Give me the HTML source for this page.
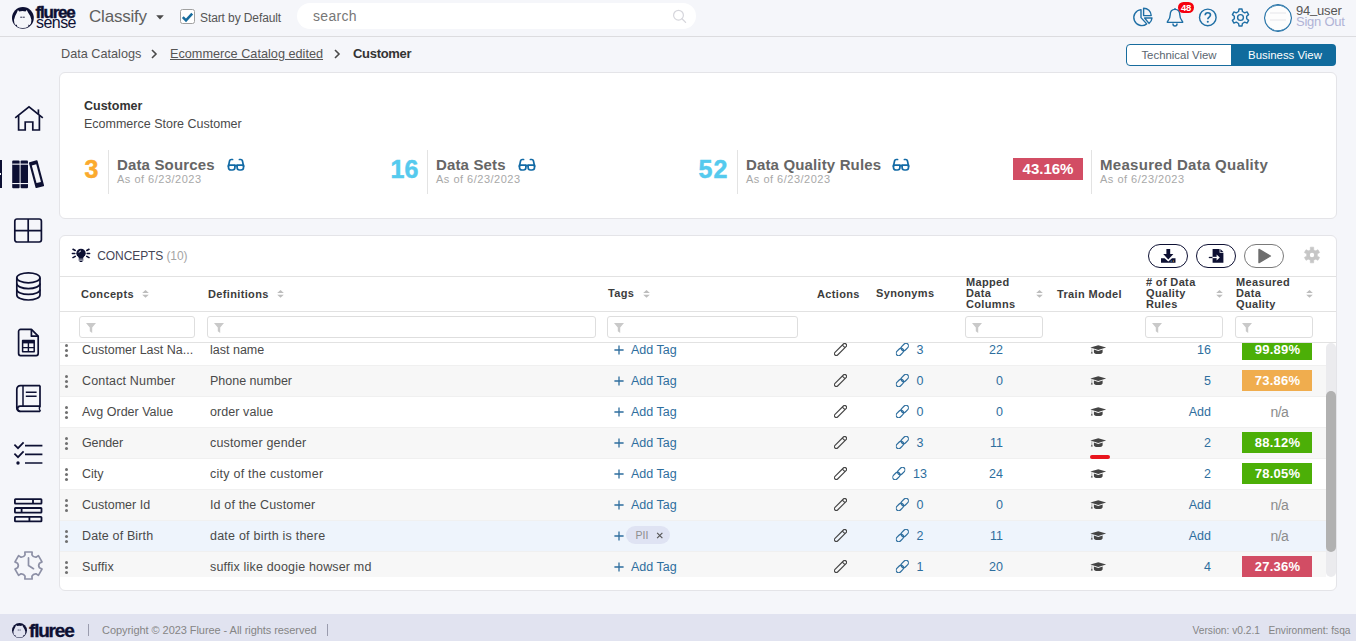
<!DOCTYPE html>
<html><head><meta charset="utf-8"><title>Customer</title>
<style>
*{box-sizing:border-box;margin:0;padding:0}
html,body{width:1356px;height:641px;overflow:hidden}
body{background:#f5f6fa;font-family:"Liberation Sans",sans-serif;color:#4b4b4b;position:relative;font-size:13px}
.abs{position:absolute;white-space:nowrap}
svg{position:absolute;overflow:visible}
/* header */
#hdr{position:absolute;left:0;top:0;width:1356px;height:37px;border-bottom:1px solid #dcdcdf}
.logo-f{left:35.5px;top:3px;font-size:17px;font-weight:bold;letter-spacing:-1.2px;color:#0d1033;line-height:20px;-webkit-text-stroke:0.45px #0d1033}
.logo-s{left:36px;top:13.5px;font-size:16px;color:#0d1033;line-height:18px;letter-spacing:-0.55px}
#search{position:absolute;left:297px;top:3px;width:399px;height:26px;background:#fff;border-radius:14px}
/* cards */
.card{position:absolute;background:#fff;border:1px solid #e4e4e8;border-radius:6px}
.num{font-weight:bold;font-size:25px;line-height:30px;-webkit-text-stroke:0.5px currentColor}
.lbl{font-weight:bold;font-size:15px;color:#666;line-height:18px;letter-spacing:0.15px}
.asof{font-size:11px;color:#a8a8a8;line-height:12px;letter-spacing:0.5px}
.vdiv{position:absolute;width:1px;background:#e3e3e3}
/* table */
.th{font-weight:bold;font-size:11px;color:#3c3c3c;line-height:11px;letter-spacing:0.35px}
.fi{position:absolute;height:22px;top:316px;border:1px solid #dedede;border-radius:3px;background:#fff}
.row{position:absolute;left:60px;width:1266px;height:31px;border-bottom:1px solid #f0f0f0;background:#fff}
.row.alt{background:#f7f7f7}
.row.hov{background:#eef4fc}
.row div{position:absolute;white-space:nowrap;line-height:16px;top:7px;font-size:12.5px;color:#4a4a4a}
.row .lk{color:#2e6e9e}
.row .badge{position:absolute;left:1182px;top:4px;width:70px;height:21px;color:#fff;font-weight:bold;font-size:13px;text-align:center;line-height:21px;letter-spacing:0.2px;padding-left:1px}

.hd{position:absolute;left:5px;top:8.5px;width:3px;height:3px;border-radius:50%;background:#707070;box-shadow:0 5px 0 #707070,0 10px 0 #707070}
.row .syn{left:849.2px;transform:translateX(-50%);padding-left:21.4px}
.row .pill{left:566px;top:5px;width:44px;height:18px;border-radius:9px;background:#dfe3f3;color:#8e8e8e;font-size:10.5px;line-height:18.5px;padding-left:9.5px}
</style></head><body>

<svg width="0" height="0" style="position:absolute"><defs>
<symbol id="plus" viewBox="0 0 10 10"><path d="M5 0.4 L5 9.6 M0.4 5 L9.6 5" stroke="#2e6e9e" stroke-width="1.3" fill="none"/></symbol>
<symbol id="xx" viewBox="0 0 8 8"><path d="M1 1 L7 7 M7 1 L1 7" stroke="#555" stroke-width="1.3" fill="none"/></symbol>
<symbol id="pen" viewBox="0 0 14 14"><g transform="rotate(45 7 7)" fill="none" stroke="#444" stroke-width="1.2"><rect x="5" y="-1.4" width="4" height="16.8" rx="2"/><path d="M5 2.2 L9 2.2"/></g></symbol>
<symbol id="lnk" viewBox="0 0 14 14"><g transform="rotate(45 7 7)" fill="none" stroke="#2e6e9e" stroke-width="1.3"><rect x="4.3" y="-1.3" width="5.4" height="9" rx="2.7"/><rect x="4.3" y="6.3" width="5.4" height="9" rx="2.7"/></g></symbol>
<symbol id="cap" viewBox="0 0 17 11" preserveAspectRatio="none"><path d="M8.5 0.2 L16.6 3 L8.5 5.8 L0.4 3 Z" fill="#444"/><path d="M4 5.2 L8.5 6.8 L13 5.2 L13 8.2 C13 9.6 11 10.4 8.5 10.4 C6 10.4 4 9.6 4 8.2 Z" fill="#444"/><path d="M1.8 3.6 L1.8 7.4 L0.8 9.8 L2.8 9.8 L2.2 7.4 L2.2 3.8 Z" fill="#444"/></symbol>
</defs></svg>
<!-- HEADER -->
<div id="hdr"></div>
<div class="abs logo-f">fluree</div>
<div class="abs logo-s">sense</div>
<div class="abs" style="left:89px;top:6.7px;font-size:17px;line-height:20px;color:#606060;letter-spacing:-0.2px">Classify</div>
<div class="abs" style="left:180px;top:9px;width:15px;height:15px;border:1px solid #a0a0a0;border-radius:2.5px;background:#fff"></div>
<div class="abs" style="left:200px;top:10.8px;font-size:12px;line-height:14px;color:#555;letter-spacing:-0.1px">Start by Default</div>
<div id="search"></div>
<div class="abs" style="left:313px;top:7px;font-size:14px;line-height:18px;color:#777;letter-spacing:0.3px">search</div>
<div class="abs" style="left:1296px;top:4px;font-size:13px;line-height:14px;color:#555;letter-spacing:-0.2px">94<span style="position:relative;top:-2.5px">_</span>user</div>
<div class="abs" style="left:1296px;top:15px;font-size:13px;line-height:14px;color:#b0b3d6;letter-spacing:-0.25px">Sign Out</div>


<!-- LOGO ICON -->
<svg style="left:12px;top:6.7px" width="21.8" height="21.8" viewBox="0 0 22 22"><circle cx="11" cy="11" r="11" fill="#0d1033"/><path d="M6 3.1 L7.3 4.5 L10.6 4.1 L13.6 4.5 L14.9 3.1 L16.2 5.6 L18.4 9.2 L19.6 13 L19.2 16.4 L17.8 18.5 L16.7 17.7 L16.4 19.8 L14 20.9 L10.8 21.3 L7.6 20.9 L5.2 19.8 L4.9 17.7 L3.8 18.5 L2.4 16.4 L2 13 L3.2 9.2 L5 5.6 Z" fill="#f5f6fa"/><rect x="8.3" y="9.8" width="2" height="1" fill="#2a2d4c"/><rect x="10.9" y="9.8" width="2" height="1" fill="#2a2d4c"/><rect x="10.3" y="10.1" width="0.6" height="0.5" fill="#9a9cb0"/></svg>
<!-- caret -->
<svg style="left:156px;top:14.8px" width="8" height="5" viewBox="0 0 8 5"><path d="M0.2 0.2 L7.8 0.2 L4 4.4 Z" fill="#4a4a4a"/></svg>
<!-- checkbox tick -->
<svg style="left:181px;top:10px" width="13" height="13" viewBox="0 0 13 13"><path d="M1.8 7.2 L5 10.4 L11.2 3.6" fill="none" stroke="#176c9e" stroke-width="2.5"/></svg>
<!-- search icon -->
<svg style="left:672px;top:9px" width="15" height="15" viewBox="0 0 15 15"><circle cx="6.5" cy="6.2" r="4.9" fill="none" stroke="#d6d6dc" stroke-width="1.2"/><path d="M10 9.8 L13.6 13.4" stroke="#d6d6dc" stroke-width="1.3" stroke-linecap="round"/></svg>
<!-- pie -->
<svg style="left:1132px;top:7px" width="22" height="20" viewBox="0 0 22 20" fill="none" stroke="#1f6fa5" stroke-width="1.4" stroke-linejoin="round"><path d="M9 2.6 A8 8 0 1 0 14.7 16.9 L9 10.6 Z"/><path d="M11.6 1.2 A7.6 7.6 0 0 1 19.2 8.6 L11.6 8.6 Z"/><path d="M12.6 11 L20 11 A7.6 7.6 0 0 1 17 16.4 Z"/></svg>
<!-- bell -->
<svg style="left:1166px;top:7px" width="18" height="20" viewBox="0 0 18 20" fill="none" stroke="#1f6fa5" stroke-width="1.4" stroke-linejoin="round" stroke-linecap="round"><path d="M9 2.4 C5.6 2.4 4.2 5 4.2 7.8 C4.2 11.8 2.6 13.2 1.4 14.6 L1.4 15.4 L16.6 15.4 L16.6 14.6 C15.4 13.2 13.8 11.8 13.8 7.8 C13.8 5 12.4 2.4 9 2.4 Z"/><path d="M7 17 A2 2 0 0 0 11 17"/><path d="M9 1.6 L9 2.4"/></svg>
<div class="abs" style="left:1178px;top:2px;width:16px;height:11px;border-radius:6px;background:#f5000f;color:#fff;font-size:9.5px;font-weight:bold;line-height:11.5px;text-align:center;letter-spacing:-0.2px">48</div>
<!-- help -->
<svg style="left:1198px;top:8px" width="20" height="20" viewBox="0 0 20 20"><circle cx="9.8" cy="9.4" r="8.3" fill="none" stroke="#1f6fa5" stroke-width="1.4"/><path d="M7.2 7.3 C7.2 5.6 8.4 4.8 9.8 4.8 C11.3 4.8 12.5 5.7 12.5 7.1 C12.5 9 9.8 9.1 9.8 11.2" fill="none" stroke="#1f6fa5" stroke-width="1.6"/><circle cx="9.8" cy="13.7" r="1.05" fill="#1f6fa5"/></svg>
<!-- gear outline -->
<svg style="left:1231px;top:8px" width="19" height="19" viewBox="-9.5 -9.5 19 19" fill="none" stroke="#1f6fa5" stroke-width="1.4" stroke-linejoin="round"><path d="M-1.95 -5.99 L-1.52 -8.46 L1.52 -8.46 L1.95 -5.99 L4.22 -4.68 L6.57 -5.55 L8.09 -2.91 L6.16 -1.31 L6.16 1.31 L8.09 2.91 L6.57 5.55 L4.22 4.68 L1.95 5.99 L1.52 8.46 L-1.52 8.46 L-1.95 5.99 L-4.22 4.68 L-6.57 5.55 L-8.09 2.91 L-6.16 1.31 L-6.16 -1.31 L-8.09 -2.91 L-6.57 -5.55 L-4.22 -4.68 Z"/><circle r="2.9"/></svg>
<!-- avatar -->
<div class="abs" style="left:1264px;top:4px;width:28px;height:28px;border-radius:50%;border:1.4px solid #1f6fa5;background:#fdfdfd;box-shadow:inset 0 0.8px 0 #1f6fa5,inset 0 -0.8px 0 #1f6fa5"></div>
<div class="abs" style="left:1270px;top:12px;width:16px;height:2px;background:#f1f1f3"></div>
<div class="abs" style="left:1270px;top:19px;width:16px;height:2px;background:#f1f1f3"></div>
<!-- breadcrumb chevrons -->
<svg style="left:149.8px;top:49.2px" width="8" height="10" viewBox="0 0 8 10"><path d="M2 1 L6 5 L2 9" fill="none" stroke="#4a4a4a" stroke-width="1.6"/></svg>
<svg style="left:332.8px;top:49.2px" width="8" height="10" viewBox="0 0 8 10"><path d="M2 1 L6 5 L2 9" fill="none" stroke="#4a4a4a" stroke-width="1.6"/></svg>

<!-- BREADCRUMB -->
<div class="abs" style="left:61px;top:46px;font-size:12.7px;line-height:16px;color:#555">Data Catalogs</div>
<div class="abs" style="left:170px;top:46px;font-size:12.7px;line-height:16px;color:#555;text-decoration:underline">Ecommerce Catalog edited</div>
<div class="abs" style="left:353px;top:46px;font-size:13px;line-height:16px;color:#333;font-weight:bold;letter-spacing:-0.3px">Customer</div>
<div class="abs" style="left:1126px;top:44px;width:106px;height:21.6px;border:1px solid #176c9e;border-radius:4px 0 0 4px;background:#fff;color:#5a6570;font-size:11.4px;line-height:20px;text-align:center">Technical View</div>
<div class="abs" style="left:1231px;top:44px;width:105px;height:21.6px;border-radius:0 4px 4px 0;background:#116b9d;color:#fff;font-size:11.4px;line-height:22px;text-align:center;padding-left:3px">Business View</div>


<!-- SIDEBAR -->
<div class="abs" style="left:0;top:160px;width:2px;height:28px;background:#0d1033"></div>
<div class="abs" style="left:0;top:173px;width:1px;height:2px;background:#f5f6fa"></div>
<!-- home -->
<svg style="left:14px;top:105px" width="30" height="27" viewBox="0 0 30 27" fill="none" stroke="#0d1033" stroke-width="1.7" stroke-linejoin="miter"><path d="M1.2 12.8 L15 1.8 L28.8 12.8"/><path d="M4.6 10.6 L4.6 25 L11.2 25 L11.2 17 L18.8 17 L18.8 25 L25.4 25 L25.4 10.6"/><path d="M24.4 9 L24.4 4.4"/></svg>
<!-- books -->
<svg style="left:11px;top:160px" width="34" height="29" viewBox="0 0 34 29"><rect x="1.2" y="0.6" width="7.4" height="27.6" rx="1" fill="#0d1033"/><rect x="9.6" y="0.6" width="7.4" height="27.6" rx="1" fill="#0d1033"/><rect x="1.2" y="3.6" width="16" height="1.1" fill="#f5f6fa"/><rect x="1.2" y="23" width="16" height="1.1" fill="#f5f6fa"/><g transform="rotate(-15 25.5 14.5)"><rect x="21.2" y="0.8" width="8.8" height="26.8" rx="0.8" fill="#0d1033"/><rect x="23.3" y="4.6" width="4.6" height="18.2" fill="#f5f6fa"/></g></svg>
<!-- grid -->
<svg style="left:13px;top:217px" width="30" height="27" viewBox="0 0 30 27" fill="none" stroke="#0d1033" stroke-width="1.7"><rect x="1.8" y="2" width="26.6" height="23" rx="2.2"/><path d="M15.2 2 L15.2 25 M1.8 13.6 L28.4 13.6"/></svg>
<!-- database -->
<svg style="left:14px;top:271px" width="28" height="31" viewBox="0 0 28 31" fill="none" stroke="#0d1033" stroke-width="1.7"><ellipse cx="14.4" cy="6.8" rx="11.6" ry="5"/><path d="M2.8 6.8 L2.8 24 A11.6 5 0 0 0 26 24 L26 6.8"/><path d="M2.8 12.6 A11.6 5 0 0 0 26 12.6"/><path d="M2.8 18.4 A11.6 5 0 0 0 26 18.4"/></svg>
<!-- sheet -->
<svg style="left:16px;top:327px" width="25" height="31" viewBox="0 0 25 31" fill="none" stroke="#0d1033" stroke-width="1.7" stroke-linejoin="round"><path d="M4.6 2.4 L15.4 2.4 L22.2 9.2 L22.2 26.6 A2 2 0 0 1 20.2 28.6 L4.6 28.6 A2 2 0 0 1 2.6 26.6 L2.6 4.4 A2 2 0 0 1 4.6 2.4 Z"/><path d="M15.4 2.4 L15.4 9.2 L22.2 9.2"/><rect x="6.6" y="13.4" width="11.6" height="11.4" stroke-width="1.5"/><rect x="6.6" y="13.4" width="11.6" height="3" fill="#0d1033" stroke="none"/><path d="M12.4 16 L12.4 24.8 M6.6 20.6 L18.2 20.6" stroke-width="1.4"/></svg>
<!-- book -->
<svg style="left:14px;top:383px" width="29" height="31" viewBox="0 0 29 31" fill="none" stroke="#0d1033" stroke-width="1.7" stroke-linejoin="round"><path d="M26 2.6 L6.4 2.6 A3.6 3.6 0 0 0 2.8 6.2 L2.8 25 A3.4 3.4 0 0 0 6.2 28.4 L26 28.4"/><path d="M26 2.6 L26 23.2 L6.2 23.2 A2.6 2.6 0 0 0 6.2 28.4"/><path d="M9 2.6 L9 23.2" stroke-width="1.5"/><path d="M11.8 9.2 L22.6 9.2 M11.8 13.2 L22.6 13.2" stroke-width="1.6"/><path d="M26 23.2 C25 25 25 26.6 26.6 28.4" stroke-width="1.4"/></svg>
<!-- checklist -->
<svg style="left:13px;top:440px" width="31" height="27" viewBox="0 0 31 27" fill="none" stroke="#0d1033" stroke-width="1.7"><path d="M12 5.6 L29.4 5.6 M12 14.4 L29.4 14.4 M12 23 L29.4 23"/><path d="M1.4 4.6 L5 8.2 L10.6 2.4"/><path d="M1.4 13.6 L5 17.2 L10.6 11.4"/><circle cx="5" cy="23" r="1.7" fill="#0d1033" stroke="none"/></svg>
<!-- table rows -->
<svg style="left:13px;top:497px" width="31" height="27" viewBox="0 0 31 27" fill="none" stroke="#0d1033" stroke-width="1.8"><rect x="1.9" y="2.1" width="26.6" height="4.6" rx="0.6"/><rect x="1.9" y="11" width="26.6" height="4.6" rx="0.6"/><rect x="1.9" y="19.8" width="26.6" height="4.6" rx="0.6"/><path d="M20 2.1 L20 6.7 M8.6 11 L8.6 15.6 M16.4 19.8 L16.4 24.4"/></svg>
<!-- gear clock -->
<svg style="left:13px;top:550px" width="31" height="31" viewBox="-15.5 -15.5 31 31" fill="none" stroke="#8d90a6" stroke-width="1.7" stroke-linejoin="round" stroke-linecap="round"><path d="M-3.46 -10.65 L-3.62 -13.52 L3.62 -13.52 L3.46 -10.65 Q4.70 -8.14 7.49 -8.32 L9.90 -9.90 L13.52 -3.62 L10.96 -2.33 Q9.40 -0.00 10.96 2.33 L13.52 3.62 L9.90 9.90 L7.49 8.32 Q4.70 8.14 3.46 10.65 L3.62 13.52 L-3.62 13.52 L-3.46 10.65 Q-4.70 8.14 -7.49 8.32 L-9.90 9.90 L-13.52 3.62 L-10.96 2.33 Q-9.40 0.00 -10.96 -2.33 L-13.52 -3.62 L-9.90 -9.90 L-7.49 -8.32 Q-4.70 -8.14 -3.46 -10.65 Z"/><path d="M0 -7.6 L0 0 L5 3.2"/></svg>

<!-- CARD 1 -->
<div class="card" style="left:59px;top:72px;width:1278px;height:147px"></div>
<div class="abs" style="left:84px;top:98px;font-size:12.5px;font-weight:bold;color:#333;line-height:16px">Customer</div>
<div class="abs" style="left:84px;top:116px;font-size:12.5px;color:#4a4a4a;line-height:16px">Ecommerce Store Customer</div>

<div class="abs num" style="left:84.5px;top:154.3px;color:#fbaa2e;letter-spacing:0.5px">3</div>
<div class="vdiv" style="left:108px;top:150px;height:44px"></div>
<div class="abs lbl" style="left:117px;top:156px">Data Sources</div>
<div class="abs asof" style="left:117px;top:173px">As of 6/23/2023</div>

<div class="abs num" style="left:390.5px;top:154.3px;color:#55caee">16</div>
<div class="vdiv" style="left:427px;top:150px;height:44px"></div>
<div class="abs lbl" style="left:436px;top:156px">Data Sets</div>
<div class="abs asof" style="left:436px;top:173px">As of 6/23/2023</div>

<div class="abs num" style="left:698.5px;top:154.3px;color:#55caee;letter-spacing:1.2px">52</div>
<div class="vdiv" style="left:737px;top:150px;height:44px"></div>
<div class="abs lbl" style="left:746px;top:156px">Data Quality Rules</div>
<div class="abs asof" style="left:746px;top:173px">As of 6/23/2023</div>

<div class="abs" style="left:1013px;top:158px;width:70px;height:22px;background:#d24d64;color:#fff;font-weight:bold;font-size:15px;line-height:22px;text-align:center">43.16%</div>
<div class="vdiv" style="left:1091px;top:150px;height:44px"></div>
<div class="abs lbl" style="left:1100px;top:156px;letter-spacing:0.3px">Measured Data Quality</div>
<div class="abs asof" style="left:1100px;top:173px">As of 6/23/2023</div>

<svg style="left:227px;top:158px" width="18" height="14" viewBox="0 0 18 14" fill="none" stroke="#126aa5" stroke-width="1.7" stroke-linecap="round" stroke-linejoin="round"><path d="M5.6 1.5 L4.2 1.5 Q2.9 1.5 2.6 2.8 L1.4 8.4"/><path d="M12.4 1.5 L13.8 1.5 Q15.1 1.5 15.4 2.8 L16.6 8.4"/><path d="M1.5 7.2 L7.9 7.2 L7.9 9.6 Q7.9 12 5.4 12 L4 12 Q1.5 12 1.5 9.6 Z"/><path d="M10.1 7.2 L16.5 7.2 L16.5 9.6 Q16.5 12 14 12 L12.6 12 Q10.1 12 10.1 9.6 Z"/><path d="M7.9 7.6 L10.1 7.6"/></svg>
<svg style="left:518px;top:158px" width="18" height="14" viewBox="0 0 18 14" fill="none" stroke="#126aa5" stroke-width="1.7" stroke-linecap="round" stroke-linejoin="round"><path d="M5.6 1.5 L4.2 1.5 Q2.9 1.5 2.6 2.8 L1.4 8.4"/><path d="M12.4 1.5 L13.8 1.5 Q15.1 1.5 15.4 2.8 L16.6 8.4"/><path d="M1.5 7.2 L7.9 7.2 L7.9 9.6 Q7.9 12 5.4 12 L4 12 Q1.5 12 1.5 9.6 Z"/><path d="M10.1 7.2 L16.5 7.2 L16.5 9.6 Q16.5 12 14 12 L12.6 12 Q10.1 12 10.1 9.6 Z"/><path d="M7.9 7.6 L10.1 7.6"/></svg>
<svg style="left:892px;top:158px" width="18" height="14" viewBox="0 0 18 14" fill="none" stroke="#126aa5" stroke-width="1.7" stroke-linecap="round" stroke-linejoin="round"><path d="M5.6 1.5 L4.2 1.5 Q2.9 1.5 2.6 2.8 L1.4 8.4"/><path d="M12.4 1.5 L13.8 1.5 Q15.1 1.5 15.4 2.8 L16.6 8.4"/><path d="M1.5 7.2 L7.9 7.2 L7.9 9.6 Q7.9 12 5.4 12 L4 12 Q1.5 12 1.5 9.6 Z"/><path d="M10.1 7.2 L16.5 7.2 L16.5 9.6 Q16.5 12 14 12 L12.6 12 Q10.1 12 10.1 9.6 Z"/><path d="M7.9 7.6 L10.1 7.6"/></svg>

<!-- CARD 2 -->
<div class="card" style="left:59px;top:235px;width:1278px;height:356px"></div>
<div class="abs" style="left:97.3px;top:247.8px;font-size:12px;line-height:16px;color:#454555;letter-spacing:-0.1px">CONCEPTS <span style="color:#a5a5a5">(10)</span></div>
<div class="abs" style="left:60px;top:276px;width:1276px;height:1px;background:#e2e2e2"></div>
<div class="abs" style="left:60px;top:311px;width:1276px;height:1px;background:#e2e2e2"></div>
<div class="abs" style="left:60px;top:342px;width:1276px;height:1px;background:#e2e2e2"></div>

<div class="abs th" style="left:81px;top:289px">Concepts</div>
<div class="abs th" style="left:208px;top:289px">Definitions</div>
<div class="abs th" style="left:608px;top:288px">Tags</div>
<div class="abs th" style="left:817px;top:289px">Actions</div>
<div class="abs th" style="left:876px;top:288px">Synonyms</div>
<div class="abs th" style="left:966px;top:277px">Mapped<br>Data<br>Columns</div>
<div class="abs th" style="left:1057px;top:289px">Train Model</div>
<div class="abs th" style="left:1146px;top:277px"># of Data<br>Quality<br>Rules</div>
<div class="abs th" style="left:1236px;top:277px">Measured<br>Data<br>Quality</div>

<div class="fi" style="left:79px;width:116px"></div>
<div class="fi" style="left:207px;width:389px"></div>
<div class="fi" style="left:607px;width:191px"></div>
<div class="fi" style="left:965px;width:78px"></div>
<div class="fi" style="left:1145px;width:78px"></div>
<div class="fi" style="left:1235px;width:78px"></div>


<!-- bulb -->
<svg style="left:71px;top:246.7px" width="20" height="16" viewBox="0 0 20 17" preserveAspectRatio="none"><circle cx="10" cy="6.6" r="4.7" fill="#0d1033"/><path d="M7.2 9 L12.8 9 L12.2 12.6 L7.8 12.6 Z" fill="#0d1033"/><rect x="7.6" y="13.2" width="4.8" height="1.1" fill="#0d1033"/><path d="M8.2 15 L11.8 15 L11 16 L9 16 Z" fill="#0d1033"/><path d="M8 6 A2.2 2.2 0 0 1 10 4.2" fill="none" stroke="#fff" stroke-width="0.9"/><path d="M1.4 6.8 L3.8 6.8 M16.2 6.8 L18.6 6.8 M2 2.4 L4.2 3.7 M18 2.4 L15.8 3.7 M2 11.2 L4.2 9.9 M18 11.2 L15.8 9.9" stroke="#0d1033" stroke-width="1.6" stroke-linecap="round"/></svg>
<!-- toolbar pills -->
<div class="abs" style="left:1148px;top:244px;width:40px;height:24px;border:1.3px solid #0d1033;border-radius:12px"></div>
<div class="abs" style="left:1196px;top:244px;width:40px;height:24px;border:1.3px solid #0d1033;border-radius:12px"></div>
<div class="abs" style="left:1244px;top:244px;width:40px;height:24px;border:1px solid #7a7a7a;border-radius:12px"></div>
<!-- download -->
<svg style="left:1161px;top:249px" width="15" height="14" viewBox="0 0 15 14" fill="#0d1033"><path d="M5.4 0 L9.2 0 L9.2 5 L12.4 5 L7.3 10.4 L2.2 5 L5.4 5 Z"/><path d="M0 9.3 L3.6 9.3 L7.3 12.4 L11 9.3 L14.5 9.3 L14.5 13.8 L0 13.8 Z"/><rect x="9.6" y="11.6" width="1.2" height="1" fill="#4d9fe0"/><rect x="11.8" y="11.6" width="1.2" height="1" fill="#e0a030"/></svg>
<!-- import -->
<svg style="left:1208px;top:249px" width="17" height="14" viewBox="0 0 17 14"><path d="M4.6 0 L11.6 0 L11.6 3.8 L15.4 3.8 L15.4 13.8 L4.6 13.8 Z" fill="#0d1033"/><path d="M12.4 0 L15.4 3 L12.4 3 Z" fill="#0d1033"/><path d="M0.8 8.5 L4.6 8.5" stroke="#0d1033" stroke-width="1.3"/><path d="M4.6 8.5 L9 8.5" stroke="#fff" stroke-width="1.3"/><path d="M8.6 5.6 L11.8 8.5 L8.6 11.4 Z" fill="#fff"/></svg>
<!-- play -->
<svg style="left:1258px;top:248px" width="14" height="16" viewBox="0 0 14 16"><path d="M1 1.4 L12.4 8 L1 14.6 Z" fill="#6e6e6e" stroke="#6e6e6e" stroke-width="1.4" stroke-linejoin="round"/></svg>
<!-- solid gear -->
<svg style="left:1303px;top:246px" width="18" height="18" viewBox="-9 -9 18 18"><path d="M-1.73 -5.33 L-1.66 -7.83 L1.66 -7.83 L1.73 -5.33 Q2.50 -4.33 3.75 -4.16 L5.95 -5.35 L7.61 -2.47 L5.48 -1.16 Q5.00 -0.00 5.48 1.16 L7.61 2.47 L5.95 5.35 L3.75 4.16 Q2.50 4.33 1.73 5.33 L1.66 7.83 L-1.66 7.83 L-1.73 5.33 Q-2.50 4.33 -3.75 4.16 L-5.95 5.35 L-7.61 2.47 L-5.48 1.16 Q-5.00 0.00 -5.48 -1.16 L-7.61 -2.47 L-5.95 -5.35 L-3.75 -4.16 Q-2.50 -4.33 -1.73 -5.33 Z" fill="#c6c6c6" stroke="#c6c6c6" stroke-width="0.6" stroke-linejoin="round"/><circle r="2.2" fill="#fff"/></svg>
<svg style="left:142px;top:290px" width="7" height="8" viewBox="0 0 7 8" fill="#bdbdbd"><path d="M0.2 3 L3.5 0 L6.8 3 Z"/><path d="M0.2 4.8 L3.5 7.8 L6.8 4.8 Z"/></svg>
<svg style="left:277px;top:290px" width="7" height="8" viewBox="0 0 7 8" fill="#bdbdbd"><path d="M0.2 3 L3.5 0 L6.8 3 Z"/><path d="M0.2 4.8 L3.5 7.8 L6.8 4.8 Z"/></svg>
<svg style="left:643px;top:290px" width="7" height="8" viewBox="0 0 7 8" fill="#bdbdbd"><path d="M0.2 3 L3.5 0 L6.8 3 Z"/><path d="M0.2 4.8 L3.5 7.8 L6.8 4.8 Z"/></svg>
<svg style="left:1035.6px;top:290px" width="7" height="8" viewBox="0 0 7 8" fill="#bdbdbd"><path d="M0.2 3 L3.5 0 L6.8 3 Z"/><path d="M0.2 4.8 L3.5 7.8 L6.8 4.8 Z"/></svg>
<svg style="left:1216.2px;top:290px" width="7" height="8" viewBox="0 0 7 8" fill="#bdbdbd"><path d="M0.2 3 L3.5 0 L6.8 3 Z"/><path d="M0.2 4.8 L3.5 7.8 L6.8 4.8 Z"/></svg>
<svg style="left:1306px;top:290px" width="7" height="8" viewBox="0 0 7 8" fill="#bdbdbd"><path d="M0.2 3 L3.5 0 L6.8 3 Z"/><path d="M0.2 4.8 L3.5 7.8 L6.8 4.8 Z"/></svg>
<svg style="left:86px;top:323px" width="10" height="10" viewBox="0 0 10 10" fill="#c9c9c9"><path d="M0 0 L10 0 L6.2 4.6 L6.2 10 L3.8 8.2 L3.8 4.6 Z"/></svg>
<svg style="left:214px;top:323px" width="10" height="10" viewBox="0 0 10 10" fill="#c9c9c9"><path d="M0 0 L10 0 L6.2 4.6 L6.2 10 L3.8 8.2 L3.8 4.6 Z"/></svg>
<svg style="left:614px;top:323px" width="10" height="10" viewBox="0 0 10 10" fill="#c9c9c9"><path d="M0 0 L10 0 L6.2 4.6 L6.2 10 L3.8 8.2 L3.8 4.6 Z"/></svg>
<svg style="left:972px;top:323px" width="10" height="10" viewBox="0 0 10 10" fill="#c9c9c9"><path d="M0 0 L10 0 L6.2 4.6 L6.2 10 L3.8 8.2 L3.8 4.6 Z"/></svg>
<svg style="left:1152px;top:323px" width="10" height="10" viewBox="0 0 10 10" fill="#c9c9c9"><path d="M0 0 L10 0 L6.2 4.6 L6.2 10 L3.8 8.2 L3.8 4.6 Z"/></svg>
<svg style="left:1242px;top:323px" width="10" height="10" viewBox="0 0 10 10" fill="#c9c9c9"><path d="M0 0 L10 0 L6.2 4.6 L6.2 10 L3.8 8.2 L3.8 4.6 Z"/></svg>

<!-- ROWS -->
<div id="tb" style="position:absolute;left:0;top:343px;width:1356px;height:234px;overflow:hidden">
<div class="row " style="top:-8px"><i class="hd"></i><div style="left:22px">Customer Last Na...</div><div style="left:150px">last name</div><svg style="left:554px;top:10px" width="10" height="10"><use href="#plus"/></svg><div class="lk" style="left:571px">Add Tag</div><svg style="left:773.5px;top:8px" width="13" height="13"><use href="#pen"/></svg><div class="lk syn"><svg style="left:0.5px;top:1px" width="13" height="13"><use href="#lnk"/></svg>3</div><div class="lk" style="right:323px">22</div><svg style="left:1029.5px;top:9.8px" width="16.5" height="9.6" preserveAspectRatio="none"><use href="#cap"/></svg><div class="lk" style="right:115px">16</div><div class="badge" style="background:#4caf07">99.89%</div></div>
<div class="row alt" style="top:23px"><i class="hd"></i><div style="left:22px;letter-spacing:0.16px">Contact Number</div><div style="left:150px">Phone number</div><svg style="left:554px;top:10px" width="10" height="10"><use href="#plus"/></svg><div class="lk" style="left:571px">Add Tag</div><svg style="left:773.5px;top:8px" width="13" height="13"><use href="#pen"/></svg><div class="lk syn"><svg style="left:0.5px;top:1px" width="13" height="13"><use href="#lnk"/></svg>0</div><div class="lk" style="right:323px">0</div><svg style="left:1029.5px;top:9.8px" width="16.5" height="9.6" preserveAspectRatio="none"><use href="#cap"/></svg><div class="lk" style="right:115px">5</div><div class="badge" style="background:#f0ad4e">73.86%</div></div>
<div class="row " style="top:54px"><i class="hd"></i><div style="left:22px">Avg Order Value</div><div style="left:150px;letter-spacing:0.07px">order value</div><svg style="left:554px;top:10px" width="10" height="10"><use href="#plus"/></svg><div class="lk" style="left:571px">Add Tag</div><svg style="left:773.5px;top:8px" width="13" height="13"><use href="#pen"/></svg><div class="lk syn"><svg style="left:0.5px;top:1px" width="13" height="13"><use href="#lnk"/></svg>0</div><div class="lk" style="right:323px">0</div><svg style="left:1029.5px;top:9.8px" width="16.5" height="9.6" preserveAspectRatio="none"><use href="#cap"/></svg><div class="lk" style="right:115px">Add</div><div style="left:1210.5px;top:6.8px;font-size:14px;letter-spacing:-0.6px;color:#8c8c8c">n/a</div></div>
<div class="row alt" style="top:85px"><i class="hd"></i><div style="left:22px;letter-spacing:-0.12px">Gender</div><div style="left:150px;letter-spacing:0.17px">customer gender</div><svg style="left:554px;top:10px" width="10" height="10"><use href="#plus"/></svg><div class="lk" style="left:571px">Add Tag</div><svg style="left:773.5px;top:8px" width="13" height="13"><use href="#pen"/></svg><div class="lk syn"><svg style="left:0.5px;top:1px" width="13" height="13"><use href="#lnk"/></svg>3</div><div class="lk" style="right:323px">11</div><svg style="left:1029.5px;top:9.8px" width="16.5" height="9.6" preserveAspectRatio="none"><use href="#cap"/></svg><div class="lk" style="right:115px">2</div><div class="badge" style="background:#4caf07">88.12%</div><i style="position:absolute;left:1030px;top:27px;width:20px;height:4px;border-radius:2px;background:#e8141c"></i></div>
<div class="row " style="top:116px"><i class="hd"></i><div style="left:22px">City</div><div style="left:150px;letter-spacing:0.25px">city of the customer</div><svg style="left:554px;top:10px" width="10" height="10"><use href="#plus"/></svg><div class="lk" style="left:571px">Add Tag</div><svg style="left:773.5px;top:8px" width="13" height="13"><use href="#pen"/></svg><div class="lk syn"><svg style="left:0.5px;top:1px" width="13" height="13"><use href="#lnk"/></svg>13</div><div class="lk" style="right:323px">24</div><svg style="left:1029.5px;top:9.8px" width="16.5" height="9.6" preserveAspectRatio="none"><use href="#cap"/></svg><div class="lk" style="right:115px">2</div><div class="badge" style="background:#4caf07">78.05%</div></div>
<div class="row alt" style="top:147px"><i class="hd"></i><div style="left:22px">Customer Id</div><div style="left:150px;letter-spacing:0.14px">Id of the Customer</div><svg style="left:554px;top:10px" width="10" height="10"><use href="#plus"/></svg><div class="lk" style="left:571px">Add Tag</div><svg style="left:773.5px;top:8px" width="13" height="13"><use href="#pen"/></svg><div class="lk syn"><svg style="left:0.5px;top:1px" width="13" height="13"><use href="#lnk"/></svg>0</div><div class="lk" style="right:323px">0</div><svg style="left:1029.5px;top:9.8px" width="16.5" height="9.6" preserveAspectRatio="none"><use href="#cap"/></svg><div class="lk" style="right:115px">Add</div><div style="left:1210.5px;top:6.8px;font-size:14px;letter-spacing:-0.6px;color:#8c8c8c">n/a</div></div>
<div class="row hov" style="top:178px"><i class="hd"></i><div style="left:22px;letter-spacing:0.14px">Date of Birth</div><div style="left:150px;letter-spacing:0.22px">date of birth is there</div><svg style="left:554px;top:10px" width="10" height="10"><use href="#plus"/></svg><div class="pill">PII<svg style="left:29.5px;top:6px" width="7.5" height="7"><use href="#xx"/></svg></div><svg style="left:773.5px;top:8px" width="13" height="13"><use href="#pen"/></svg><div class="lk syn"><svg style="left:0.5px;top:1px" width="13" height="13"><use href="#lnk"/></svg>2</div><div class="lk" style="right:323px">11</div><svg style="left:1029.5px;top:9.8px" width="16.5" height="9.6" preserveAspectRatio="none"><use href="#cap"/></svg><div class="lk" style="right:115px">Add</div><div style="left:1210.5px;top:6.8px;font-size:14px;letter-spacing:-0.6px;color:#8c8c8c">n/a</div></div>
<div class="row alt" style="top:209px"><i class="hd"></i><div style="left:22px;letter-spacing:0.14px">Suffix</div><div style="left:150px;letter-spacing:0.17px">suffix like doogie howser md</div><svg style="left:554px;top:10px" width="10" height="10"><use href="#plus"/></svg><div class="lk" style="left:571px">Add Tag</div><svg style="left:773.5px;top:8px" width="13" height="13"><use href="#pen"/></svg><div class="lk syn"><svg style="left:0.5px;top:1px" width="13" height="13"><use href="#lnk"/></svg>1</div><div class="lk" style="right:323px">20</div><svg style="left:1029.5px;top:9.8px" width="16.5" height="9.6" preserveAspectRatio="none"><use href="#cap"/></svg><div class="lk" style="right:115px">4</div><div class="badge" style="background:#d24d64">27.36%</div></div>
</div>


<!-- SCROLLBAR -->
<div class="abs" style="left:1326px;top:343px;width:10px;height:234px;border-radius:5px;background:#ebebee"></div>
<div class="abs" style="left:1326px;top:391px;width:10px;height:161px;border-radius:5px;background:#b1b1b1"></div>

<!-- FOOTER -->
<div class="abs" style="left:0;top:614px;width:1356px;height:27px;background:#e1e3f0"></div>
<div class="abs" style="left:102px;top:624px;font-size:11px;line-height:13px;color:#858585;letter-spacing:-0.06px">Copyright © 2023 Fluree - All rights reserved</div>
<div class="abs" style="right:5.5px;top:624px;font-size:10.2px;line-height:13px;color:#858585">Version: v0.2.1 &nbsp; Environment: fsqa</div>


<svg style="left:11.7px;top:623.2px" width="15" height="15" viewBox="0 0 22 22"><circle cx="11" cy="11" r="11" fill="#0d1033"/><path d="M6 3.1 L7.3 4.5 L10.6 4.1 L13.6 4.5 L14.9 3.1 L16.2 5.6 L18.4 9.2 L19.6 13 L19.2 16.4 L17.8 18.5 L16.7 17.7 L16.4 19.8 L14 20.9 L10.8 21.3 L7.6 20.9 L5.2 19.8 L4.9 17.7 L3.8 18.5 L2.4 16.4 L2 13 L3.2 9.2 L5 5.6 Z" fill="#e1e3f0"/><rect x="8.3" y="9.8" width="2" height="1" fill="#2a2d4c"/><rect x="10.9" y="9.8" width="2" height="1" fill="#2a2d4c"/><rect x="10.3" y="10.1" width="0.6" height="0.5" fill="#9a9cb0"/></svg>
<div class="abs" style="left:29px;top:620.2px;font-size:19px;font-weight:bold;letter-spacing:-1.2px;color:#0d1033;line-height:22px;-webkit-text-stroke:0.35px #0d1033">fluree</div>
<div class="abs" style="left:88px;top:624px;width:1px;height:12px;background:#9a9cae"></div>
<div class="abs" style="left:327px;top:624px;width:1px;height:12px;background:#9a9cae"></div>
</body></html>
